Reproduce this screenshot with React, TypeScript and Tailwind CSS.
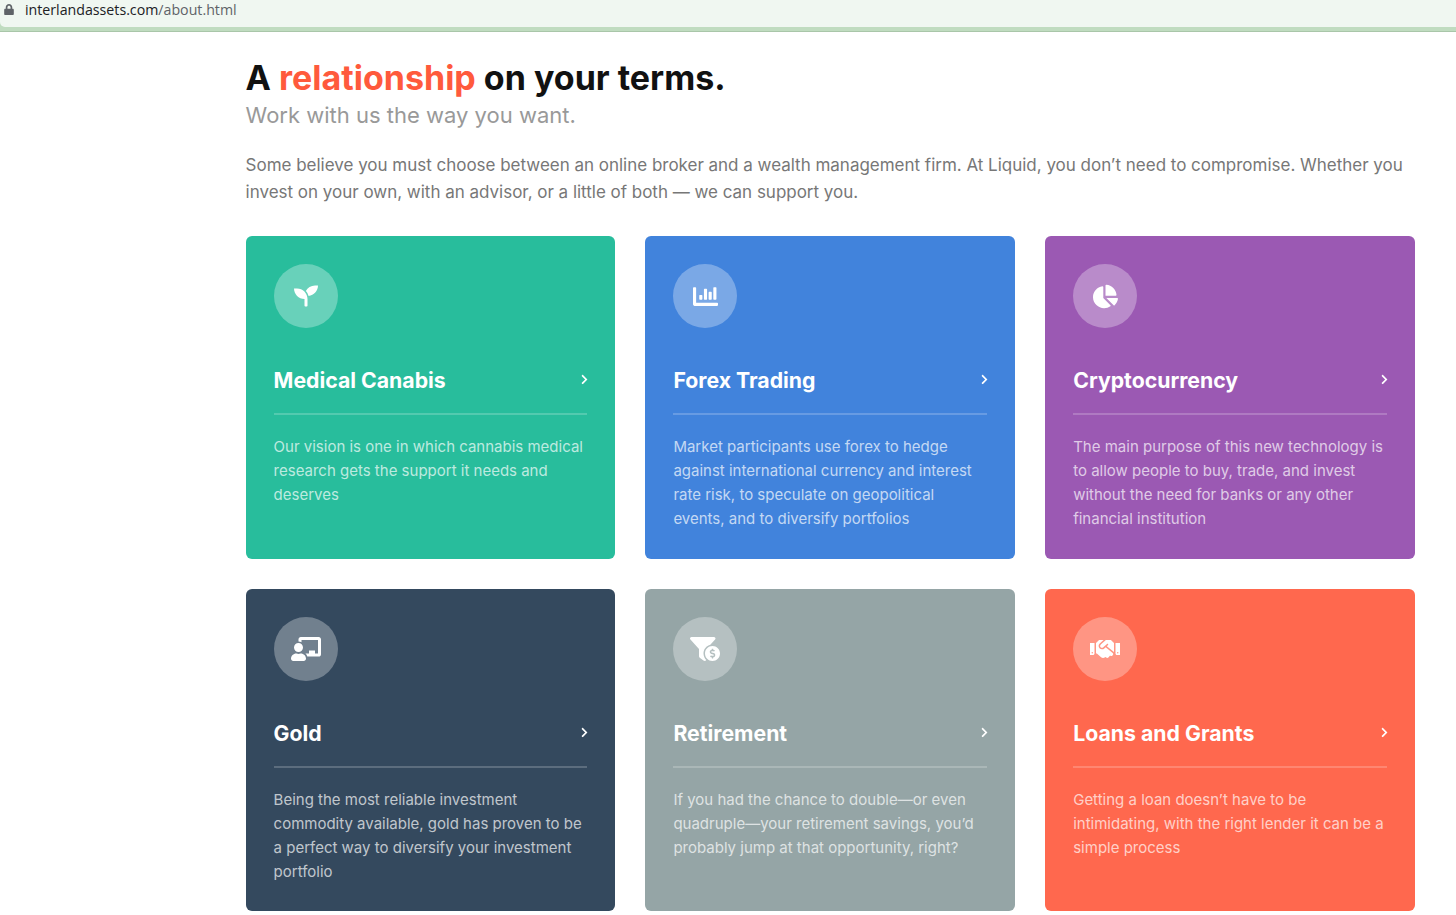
import { FaSeedling, FaChartBar, FaChartPie, FaChalkboardTeacher, FaFunnelDollar, FaHandshake, FaChevronRight, FaLock } from "react-icons/fa"

const cards = [
  { title: "Medical Canabis", icon: FaSeedling, bg: "bg-[#28bd9c]", size: "h-[24px] w-[24px]", text: "Our vision is one in which cannabis medical research gets the support it needs and deserves" },
  { title: "Forex Trading", icon: FaChartBar, bg: "bg-[#4183dc]", size: "h-[25px] w-[25px]", text: "Market participants use forex to hedge against international currency and interest rate risk, to speculate on geopolitical events, and to diversify portfolios" },
  { title: "Cryptocurrency", icon: FaChartPie, bg: "bg-[#9b59b3]", size: "h-[25px] w-[25px]", text: "The main purpose of this new technology is to allow people to buy, trade, and invest without the need for banks or any other financial institution" },
  { title: "Gold", icon: FaChalkboardTeacher, bg: "bg-[#34495e]", size: "h-[30px] w-[30px]", text: "Being the most reliable investment commodity available, gold has proven to be a perfect way to diversify your investment portfolio" },
  { title: "Retirement", icon: FaFunnelDollar, bg: "bg-[#95a5a6]", size: "h-[30px] w-[30px]", text: "If you had the chance to double—or even quadruple—your retirement savings, you’d probably jump at that opportunity, right?" },
  { title: "Loans and Grants", icon: FaHandshake, bg: "bg-[#ff684e]", size: "h-[30px] w-[30px]", text: "Getting a loan doesn’t have to be intimidating, with the right lender it can be a simple process" },
]

export default function App() {
  return (
    <div className="min-h-[915px] bg-white font-['Inter',sans-serif] overflow-hidden">
      <div className="h-[32px] bg-[#c0dcc0] border-b border-[#a9c6a9]">
        <div className="h-[27px] bg-[#f0f7f1] flex items-start pl-[4px] gap-[11px] rounded-bl-[5px]">
          <FaLock className="h-[11px] w-[10px] mt-[4px] text-[#5f6368]" />
          <span className="font-['Open_Sans',sans-serif] text-[14.2px] leading-[19px] text-[#202124]">
            interlandassets.com<span className="text-[#5f6368]">/about.html</span>
          </span>
        </div>
      </div>

      <div className="pl-[245.6px] pr-[41px]">
        <h1 className="mt-[24px] text-[34px] leading-[44px] font-bold text-[#111]">
          A <span className="text-[#ff5a3c]">relationship</span> on your terms.
        </h1>
        <h2 className="text-[22px] leading-[31px] text-[#999]">Work with us the way you want.</h2>
        <p className="mt-[21px] text-[17px] leading-[27px] tracking-[-0.015px] text-[#777]">
          Some believe you must choose between an online broker and a wealth management firm. At Liquid, you don’t need to compromise. Whether you invest on your own, with an advisor, or a little of both — we can support you.
        </p>

        <div className="mt-[30px] grid grid-cols-3 gap-[30px]">
          {cards.map((card) => {
            const Icon = card.icon
            return (
              <div key={card.title} className={`${card.bg} h-[322.6px] rounded-[6px] p-[28px] text-white`}>
                <div className="h-[64px] w-[64px] rounded-full bg-white/30 flex items-center justify-center">
                  <Icon className={card.size} />
                </div>
                <div className="mt-[24px] flex justify-between border-b-2 border-white/20 h-[63px] pt-[13px]">
                  <h3 className="text-[21.25px] leading-[30px] font-bold">{card.title}</h3>
                  <FaChevronRight className="h-[11px] w-[7px] mt-[9px] mr-[-0.5px]" />
                </div>
                <p className="mt-[20px] text-[15px] leading-[24px] text-white/70">{card.text}</p>
              </div>
            )
          })}
        </div>
      </div>
    </div>
  )
}
